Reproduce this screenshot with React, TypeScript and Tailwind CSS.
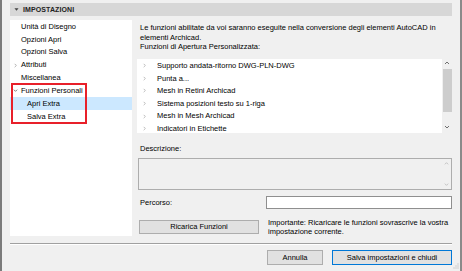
import React from "react";

const font = { fontFamily: '"Liberation Sans", Arial, sans-serif' };

const treeItems = [
  { label: "Unità di Disegno", indent: 0, icon: null as null | "right" | "down" },
  { label: "Opzioni Apri", indent: 0, icon: null },
  { label: "Opzioni Salva", indent: 0, icon: null },
  { label: "Attributi", indent: 0, icon: "right" },
  { label: "Miscellanea", indent: 0, icon: null },
  { label: "Funzioni Personali", indent: 0, icon: "down" },
  { label: "Apri Extra", indent: 1, icon: null, selected: true },
  { label: "Salva Extra", indent: 1, icon: null },
];

const functions = [
  "Supporto andata-ritorno DWG-PLN-DWG",
  "Punta a...",
  "Mesh in Retini Archicad",
  "Sistema posizioni testo su 1-riga",
  "Mesh in Mesh Archicad",
  "Indicatori in Etichette",
];

const ChevronRight = ({ className = "" }: { className?: string }) => (
  <svg viewBox="0 0 6 6" className={className}>
    <path d="M2 1 L4 3 L2 5" fill="none" stroke="currentColor" strokeWidth="0.9" />
  </svg>
);

const ChevronDown = ({ className = "" }: { className?: string }) => (
  <svg viewBox="0 0 6 6" className={className}>
    <path d="M1 2 L3 4 L5 2" fill="none" stroke="currentColor" strokeWidth="0.9" />
  </svg>
);

const ChevronUp = ({ className = "" }: { className?: string }) => (
  <svg viewBox="0 0 6 6" className={className}>
    <path d="M1 4 L3 2 L5 4" fill="none" stroke="currentColor" strokeWidth="0.9" />
  </svg>
);

export default function App() {
  return (
    <div
      className="relative flex h-[271px] w-[462px] flex-col overflow-hidden border-l-2 border-r-2 border-l-[#7b7b7b] border-r-[#8a8a8a] bg-[#f0f0f0] pl-[8px] pr-[8px] pt-[3px] text-[7.5px] leading-[9.5px] text-black"
      style={font}
    >
      {/* section header */}
      <div className="flex h-[13px] items-center bg-[#d7d7d7]">
        <svg viewBox="0 0 6 6" className="ml-[4px] h-[5px] w-[5px] text-[#444]">
          <path d="M0.5 1.5 L5.5 1.5 L3 4.5 Z" fill="currentColor" />
        </svg>
        <span className="ml-[4px] text-[7px] font-bold tracking-[0.1px] text-[#222]">IMPOSTAZIONI</span>
      </div>

      <div className="mt-[4px] flex h-[216px] gap-[5px]">
        {/* tree */}
        <div className="w-[122px] bg-white">
          {treeItems.map((it) => (
            <div
              key={it.label}
              className={`flex h-[12.9px] items-center ${it.selected ? "bg-[#cce8ff]" : ""}`}
            >
              <div className={`flex h-full items-center ${it.indent ? "w-[17px]" : "w-[11px]"}`}>
                {it.icon === "right" && <ChevronRight className="ml-[3px] h-[5px] w-[5px] text-[#9a9a9a]" />}
                {it.icon === "down" && <ChevronDown className="ml-[3px] h-[5px] w-[5px] text-[#555]" />}
              </div>
              <span className="whitespace-nowrap">{it.label}</span>
            </div>
          ))}
        </div>

        {/* right column */}
        <div className="flex w-[315px] flex-col">
          <div className="pl-[3px] pt-[3px] whitespace-nowrap">
            <div>Le funzioni abilitate da voi saranno eseguite nella conversione degli elementi AutoCAD in</div>
            <div>elementi Archicad.</div>
            <div>Funzioni di Apertura Personalizzata:</div>
          </div>

          <div className="mt-[7.5px] flex h-[74px]">
            <div className="flex-1 overflow-hidden bg-white pt-[0.5px]">
              {functions.map((f) => (
                <div key={f} className="flex h-[12.6px] items-center">
                  <ChevronRight className="ml-[5px] h-[5px] w-[5px] text-[#a8a8a8]" />
                  <span className="ml-[10px] whitespace-nowrap">{f}</span>
                </div>
              ))}
            </div>
            <div className="flex w-[10px] flex-col items-center bg-[#f0f0f0]">
              <ChevronUp className="mt-[1px] h-[6px] w-[6px] text-[#606060]" />
              <div className="mt-[3px] h-[43px] w-[9px] bg-[#cdcdcd]" />
              <div className="flex-1" />
              <ChevronDown className="mb-[3px] h-[6px] w-[6px] text-[#606060]" />
            </div>
          </div>

          <div className="mt-[11.25px] pl-[3px]">Descrizione:</div>
          <div className="ml-px mt-[4.25px] flex h-[33px] justify-end border border-[#adadad] bg-[#f0f0f0]">
            <div className="flex w-[10px] flex-col items-center justify-between py-[2px]">
              <ChevronUp className="h-[5px] w-[5px] text-[#b5b5b5]" />
              <ChevronDown className="h-[5px] w-[5px] text-[#b5b5b5]" />
            </div>
          </div>

          <div className="mt-[6px] flex h-[13px] items-center justify-between">
            <span className="pl-[3px]">Percorso:</span>
            <div className="h-[13px] w-[186px] border border-[#8f8f8f] bg-white" />
          </div>

          <div className="mt-[9px] flex items-center gap-[9px]">
            <button className="ml-[2px] flex h-[14px] w-[120px] items-center justify-center border border-[#adadad] bg-[#e1e1e1]">
              Ricarica Funzioni
            </button>
            <div className="whitespace-nowrap leading-[9px]">
              <div>Importante: Ricaricare le funzioni sovrascrive la vostra</div>
              <div>impostazione corrente.</div>
            </div>
          </div>
        </div>
      </div>

      {/* separator */}
      <div className="mt-[7px] h-px bg-[#a0a0a0]" />
      <div className="h-px bg-white" />

      {/* dialog buttons */}
      <div className="mt-[5px] flex justify-end gap-[9px]">
        <button className="flex h-[15px] w-[56px] items-center justify-center border border-[#adadad] bg-[#e1e1e1]">
          Annulla
        </button>
        <button className="flex h-[15px] w-[120px] items-center justify-center border-[1.5px] border-[#0078d7] bg-[#e1e1e1]">
          Salva impostazioni e chiudi
        </button>
      </div>

      {/* resize grip */}
      <svg viewBox="0 0 6 6" className="absolute bottom-[2px] right-[1px] h-[6px] w-[6px]">
        {[
          [5, 1],
          [3, 3],
          [5, 3],
          [1, 5],
          [3, 5],
          [5, 5],
        ].map(([x, y]) => (
          <rect key={`${x}-${y}`} x={x - 0.5} y={y - 0.5} width="1" height="1" fill="#b0b0b0" />
        ))}
      </svg>

      {/* red annotation frame */}
      <div className="pointer-events-none absolute left-[8.7px] top-[83.3px] h-[40.7px] w-[76.6px] border-2 border-[#e8202a]" />
    </div>
  );
}
